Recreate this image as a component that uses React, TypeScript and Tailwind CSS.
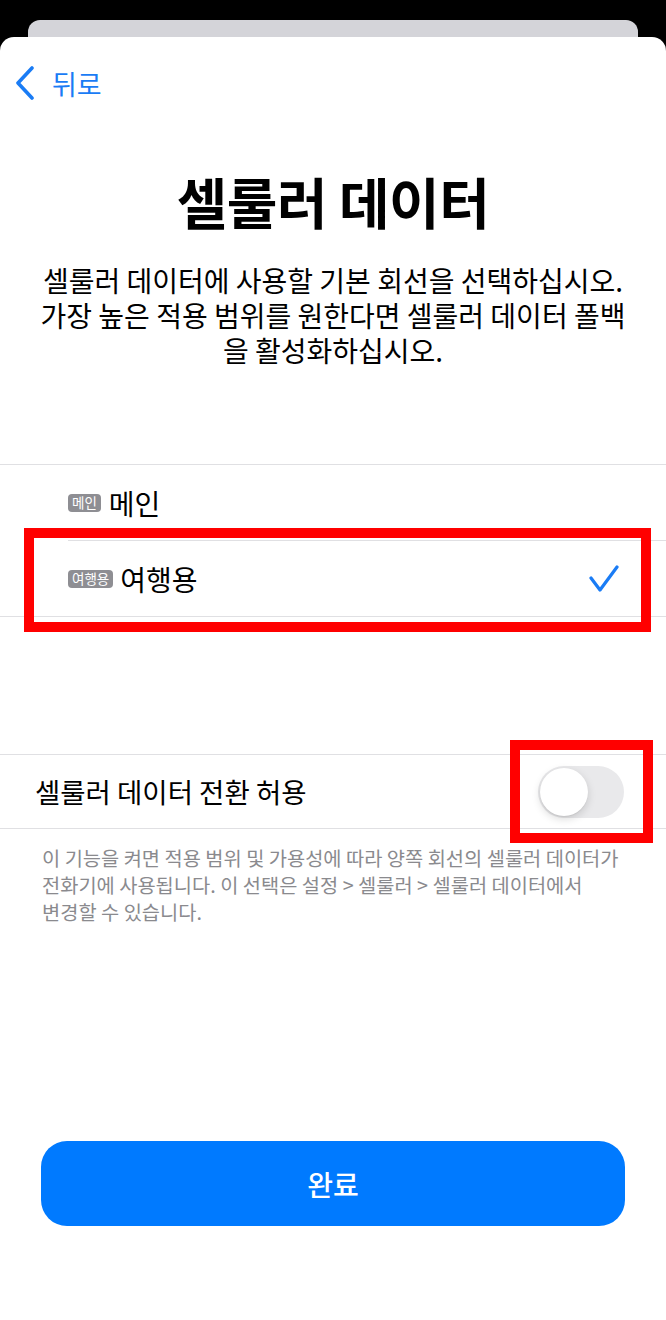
import React from "react";

const font = { fontFamily: '"Noto Sans CJK KR", "Noto Sans", sans-serif' };

function Badge({ label }: { label: string }) {
  return (
    <span className="inline-flex h-[18px] items-center rounded-[4px] bg-[#8e8e93] px-[4px] text-[13.5px] leading-none text-white">
      {label}
    </span>
  );
}

export default function App() {
  return (
    <div
      className="relative flex h-[1320px] w-[666px] flex-col overflow-hidden bg-black"
      style={font}
    >
      {/* card behind */}
      <div className="mx-[28px] mt-[20px] h-[17px] shrink-0 rounded-t-[12px] bg-[#d4d4d9]" />

      {/* sheet */}
      <div className="flex flex-1 flex-col rounded-t-[14px] bg-white">
        {/* nav */}
        <div className="mt-[26px] flex h-[40px] items-center pl-[15px]">
          <svg width="20" height="34" viewBox="0 0 20 34" fill="none">
            <path
              d="M17 2 L3 17 L17 32"
              stroke="#1a7cf5"
              strokeWidth="3.6"
              strokeLinecap="round"
              strokeLinejoin="round"
            />
          </svg>
          <span className="ml-[17px] text-[27px] leading-none text-[#1a7cf5]">뒤로</span>
        </div>

        {/* title */}
        <h1 className="mt-[67px] text-center text-[55px] font-bold leading-[60px] tracking-[-0.5px] text-black">
          셀룰러 데이터
        </h1>

        {/* description */}
        <div className="mt-[32px] flex flex-col px-[10px] text-center text-[28px] text-black">
          <div className="flex h-[35px] items-center justify-center leading-none">
            셀룰러 데이터에 사용할 기본 회선을 선택하십시오.
          </div>
          <div className="flex h-[35px] items-center justify-center leading-none">
            가장 높은 적용 범위를 원한다면 셀룰러 데이터 폴백
          </div>
          <div className="flex h-[35px] items-center justify-center leading-none">
            을 활성화하십시오.
          </div>
        </div>

        {/* line list */}
        <div className="mt-[97px] border-t border-[#e0e0e3]">
          <div className="flex h-[75px] items-center pl-[68px]">
            <Badge label="메인" />
            <span className="ml-[8px] text-[28px] leading-none text-black">메인</span>
          </div>
          <div className="ml-[68px] border-t border-[#e0e0e3]" />
          <div className="flex h-[75px] items-center pl-[68px] pr-[47px]">
            <Badge label="여행용" />
            <span className="ml-[7px] text-[28px] leading-none text-black">여행용</span>
            <div className="flex-1" />
            <svg width="30" height="28" viewBox="0 0 30 28" fill="none">
              <path
                d="M2 13 L11 25 L28 2"
                stroke="#1a7cf5"
                strokeWidth="3.2"
                strokeLinecap="round"
                strokeLinejoin="round"
              />
            </svg>
          </div>
          <div className="border-t border-[#e0e0e3]" />
        </div>

        {/* switch section */}
        <div className="mt-[137px] border-t border-[#e0e0e3]">
          <div className="flex h-[73px] items-center pl-[35px] pr-[42px]">
            <span className="text-[27.5px] leading-none text-black">셀룰러 데이터 전환 허용</span>
            <div className="flex-1" />
            <div className="flex h-[52px] w-[86px] items-center rounded-full bg-[#e9e9eb] px-[2px]">
              <div className="h-[48px] w-[48px] rounded-full bg-white shadow-[0_3px_8px_rgba(0,0,0,0.15),0_1px_1px_rgba(0,0,0,0.06)]" />
            </div>
          </div>
          <div className="border-t border-[#e0e0e3]" />
        </div>

        {/* footnote */}
        <div className="mt-[15px] flex flex-col pl-[42px] pr-[10px] text-[19.8px] text-[#8a8a8e]">
          <div className="flex h-[27px] items-center leading-none">
            이 기능을 켜면 적용 범위 및 가용성에 따라 양쪽 회선의 셀룰러 데이터가
          </div>
          <div className="flex h-[27px] items-center leading-none">
            전화기에 사용됩니다. 이 선택은 설정 &gt; 셀룰러 &gt; 셀룰러 데이터에서
          </div>
          <div className="flex h-[27px] items-center leading-none">변경할 수 있습니다.</div>
        </div>

        {/* button */}
        <div className="mt-[216px] px-[41px]">
          <button className="flex h-[85px] w-[584px] items-center justify-center rounded-[26px] bg-[#007aff] text-[28px] font-medium leading-none text-white">
            완료
          </button>
        </div>
      </div>

      {/* red annotation boxes */}
      <div className="pointer-events-none absolute left-[24px] top-[528px] h-[104px] w-[627px] border-[10px] border-[#ff0000]" />
      <div className="pointer-events-none absolute left-[510px] top-[740px] h-[103px] w-[143px] border-[10px] border-[#ff0000]" />
    </div>
  );
}
